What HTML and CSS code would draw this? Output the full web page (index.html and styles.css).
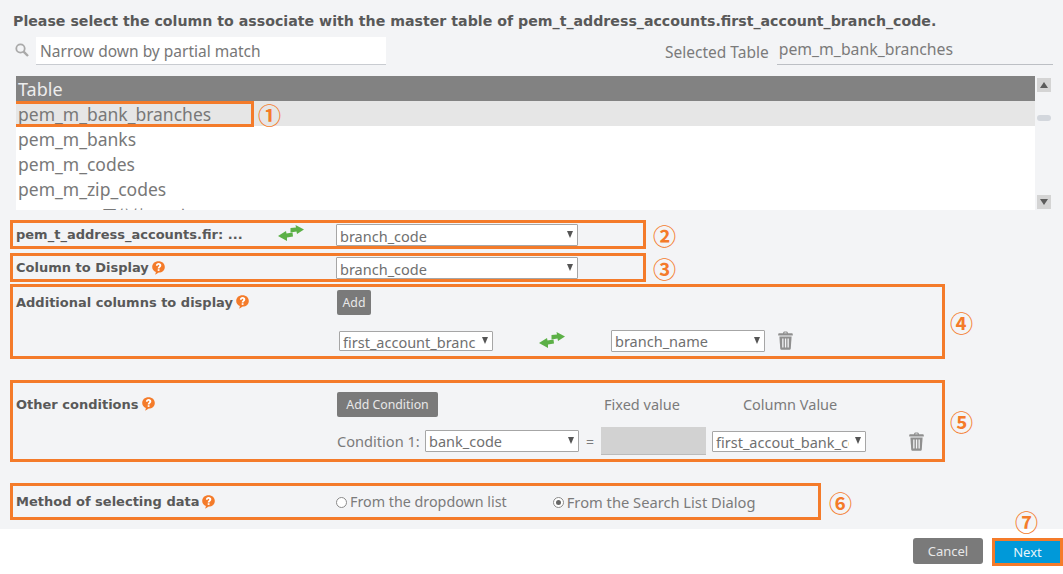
FILE: index.html
```html
<!DOCTYPE html>
<html lang="en">
<head>
<meta charset="utf-8">
<title>Select column</title>
<link rel="stylesheet" href="styles.css">
</head>
<body>
<svg class="defs" width="0" height="0" aria-hidden="true">
  <symbol id="help" viewBox="0 0 13 14">
    <path d="M6.500 0.300C10.200 0.300 12.800 2.700 12.800 5.900 12.800 9.100 10.200 11.500 6.800 11.500L3.200 13.800 3.900 11C1.700 10.100 0.200 8.200 0.200 5.900 0.200 2.700 2.800 0.300 6.500 0.300z" fill="#f47b2a"/>
    <path d="M3.900 4.700C3.900 3 5.100 2.100 6.600 2.100 8.200 2.100 9.300 3 9.300 4.400 9.300 6 7.600 6.200 7.500 7.600H5.700C5.700 5.600 7.300 5.400 7.300 4.500 7.300 4 7 3.700 6.500 3.700 6 3.700 5.700 4.100 5.700 4.700z" fill="#fff"/>
    <rect x="5.700" y="8.200" width="1.800" height="1.700" fill="#fff"/>
  </symbol>
  <symbol id="swap" viewBox="0 0 27 16">
    <path d="M13 3 18.500 2.500 18 0 26.500 4.500 19.500 9 19 6.500 13 7.500z" fill="#5cb047"/>
    <path d="M0.500 11 8.500 6 9 8.500 15 7.500 15.500 11.500 9.500 12.500 9.500 16z" fill="#5cb047"/>
  </symbol>
  <symbol id="trash" viewBox="0 0 15 19">
    <path d="M5 2.200C5 .8 5.800.4 7.500.4s2.500.4 2.500 1.800h3.600c.8 0 1.200.5 1.200 1.200v1.100H.2V3.400c0-.7.4-1.200 1.200-1.200zM6.200 2.200h2.600c0-.6-.3-.8-1.300-.8s-1.300.2-1.300.8z" fill="#8f8f8f"/>
    <path d="M1.400 5.600h12.200l-.8 11.600c-.1 1-.7 1.500-1.600 1.500H3.800c-.9 0-1.500-.5-1.600-1.500z" fill="#8f8f8f"/>
    <path d="M4.200 7.500h1.300v9H4.200zM6.900 7.500h1.300v9H6.900zM9.500 7.500h1.300v9H9.500z" fill="#f3f4f6"/>
  </symbol>
</svg>

<main class="panel">
  <h1 class="title">Please select the column to associate with the master table of pem_t_address_accounts.first_account_branch_code.</h1>

  <div class="search-row">
    <svg class="search-icon" width="14" height="14" viewBox="0 0 14 14" aria-hidden="true">
      <circle cx="5.500" cy="5.500" r="4.200" fill="none" stroke="#a9a9a9" stroke-width="1.800"/>
      <path d="M8.600 8.600 13 13" stroke="#a9a9a9" stroke-width="2.400"/>
    </svg>
    <input class="search" type="text" placeholder="Narrow down by partial match">
    <span class="selected-label">Selected Table</span>
    <input class="selected" type="text" value="pem_m_bank_branches" readonly>
  </div>

  <div class="table-wrap">
    <div class="table">
      <div class="thead">Table</div>
      <div class="trow is-selected">
        pem_m_bank_branches
        <span class="mark-box"></span>
        <span class="num num-1">①</span>
      </div>
      <div class="trow">pem_m_banks</div>
      <div class="trow">pem_m_codes</div>
      <div class="trow">pem_m_zip_codes</div>
      <div class="trow">pem_m_<span class="cjk">区分値マスタ</span></div>
    </div>
    <div class="scrollbar">
      <span class="sb-btn sb-up"></span>
      <span class="sb-thumb"></span>
      <span class="sb-btn sb-down"></span>
    </div>
  </div>

  <div class="group group-2">
    <section class="box box-mid box-row">
      <span class="label label-swap">pem_t_address_accounts.fir: ...</span>
      <svg class="swap swap-main"><use href="#swap"/></svg>
      <span class="sel sel-wide"><select><option>branch_code</option></select></span>
    </section>
    <span class="num">②</span>
  </div>

  <div class="group group-3">
    <section class="box box-mid box-row">
      <span class="label">Column to Display<svg class="help"><use href="#help"/></svg></span>
      <span class="sel sel-wide"><select><option>branch_code</option></select></span>
    </section>
    <span class="num">③</span>
  </div>

  <div class="group group-4">
    <section class="box box-wide box-add">
      <div class="line line-add">
        <span class="label">Additional columns to display<svg class="help"><use href="#help"/></svg></span>
        <button class="btn btn-add" type="button">Add</button>
      </div>
      <div class="line line-map">
        <span class="sel sel-first"><select><option>first_account_branch_code</option></select></span>
        <svg class="swap swap-map"><use href="#swap"/></svg>
        <span class="sel sel-name"><select><option>branch_name</option></select></span>
        <svg class="trash"><use href="#trash"/></svg>
      </div>
    </section>
    <span class="num">④</span>
  </div>

  <div class="group group-5">
    <section class="box box-wide box-cond">
      <div class="line line-add">
        <span class="label">Other conditions<svg class="help"><use href="#help"/></svg></span>
        <button class="btn btn-cond" type="button">Add Condition</button>
        <span class="col-head col-fixed">Fixed value</span>
        <span class="col-head col-value">Column Value</span>
      </div>
      <div class="line line-cond">
        <span class="cond-label">Condition 1:</span>
        <span class="sel sel-bank"><select><option>bank_code</option></select></span>
        <span class="eq">=</span>
        <input class="fixed" type="text" disabled>
        <span class="sel sel-value"><select><option>first_accout_bank_code</option></select></span>
        <svg class="trash trash-cond"><use href="#trash"/></svg>
      </div>
    </section>
    <span class="num">⑤</span>
  </div>

  <div class="group group-6">
    <section class="box box-method box-row">
      <span class="label">Method of selecting data<svg class="help"><use href="#help"/></svg></span>
      <label class="radio radio-a"><span class="dot"></span>From the dropdown list</label>
      <label class="radio radio-b"><span class="dot is-on"></span>From the Search List Dialog</label>
    </section>
    <span class="num">⑥</span>
  </div>
</main>

<footer class="footer">
  <button class="btn btn-cancel" type="button">Cancel</button>
  <span class="next-wrap">
    <span class="num num-7">⑦</span>
    <button class="btn btn-next" type="button">Next</button>
  </span>
</footer>
</body>
</html>
```

FILE: styles.css
```css
* { box-sizing: border-box; }
html, body { margin: 0; padding: 0; }
body {
  width: 1063px;
  height: 574px;
  overflow: hidden;
  background: #fff;
  color: #6f6f6f;
  font-family: "Noto Sans", "Noto Sans CJK JP", sans-serif;
  font-size: 15px;
}
.defs { position: absolute; }

.panel {
  height: 529px;
  padding: 12px 0 0 10px;
  background: #f3f4f6;
}
.title {
  margin: 0 0 0 3px;
  height: 19px;
  font-family: "DejaVu Sans", sans-serif;
  font-size: 14.180px;
  line-height: 19px;
  font-weight: 700;
  color: #595959;
  white-space: nowrap;
}

.search-row {
  display: flex;
  align-items: stretch;
  height: 28px;
  margin-top: 6px;
}
.search-icon { margin: 6px 0 0 5px; flex: none; }
.search {
  width: 350px;
  margin-left: 7px;
  padding: 0 4px;
  border: 0;
  border-bottom: 1px solid #c9ccd1;
  background: #fff;
  font: inherit;
  font-size: 15.500px;
  color: #6f6f6f;
}
.search::placeholder { color: #777; opacity: 1; }
.selected-label {
  margin-left: 279px;
  font-size: 15.500px;
  line-height: 30px;
  color: #7b7b7b;
  white-space: nowrap;
}
.selected {
  width: 276px;
  margin-left: 8px;
  padding: 0 2px 4px;
  border: 0;
  border-bottom: 1px solid #bcbfc4;
  background: transparent;
  font: inherit;
  font-size: 15.800px;
  color: #7b7b7b;
}

.table-wrap {
  display: flex;
  width: 1043px;
  height: 134px;
  margin: 11px 0 0 6px;
}
.table {
  position: relative;
  width: 1019px;
  overflow: hidden;
  background: #fff;
}
.thead {
  height: 25px;
  padding-left: 2px;
  background: #828282;
  color: #ededed;
  font-size: 18px;
  line-height: 26px;
}
.trow {
  position: relative;
  height: 25px;
  padding-left: 2px;
  font-size: 17.500px;
  line-height: 27px;
  color: #787878;
  white-space: nowrap;
}
.cjk { margin-left: 15px; font-size: 14.800px; }
.is-selected { background: #e6e6e6; }
.mark-box {
  position: absolute;
  left: -6px;
  top: 0;
  width: 244px;
  height: 26px;
  border: 3px solid #f47b2a;
}
.num {
  flex: none;
  color: #f47b2a;
  font-family: "Noto Sans CJK JP", sans-serif;
  font-size: 23px;
  font-weight: 700;
  line-height: 26px;
}
.num-1 {
  position: absolute;
  left: 242px;
  top: 0;
}
.scrollbar {
  position: relative;
  flex: none;
  width: 17px;
}
.sb-btn {
  position: absolute;
  left: 2px;
  width: 14px;
  height: 14px;
  background: #d4d4d4;
}
.sb-btn::after {
  content: "";
  position: absolute;
  left: 3px;
  border-left: 4px solid transparent;
  border-right: 4px solid transparent;
}
.sb-up { top: 2px; }
.sb-up::after { top: 4px; border-bottom: 6px solid #5c5c5c; }
.sb-down { bottom: 1px; }
.sb-down::after { top: 4px; border-top: 6px solid #5c5c5c; }
.sb-thumb {
  position: absolute;
  left: 2px;
  top: 39px;
  width: 14px;
  height: 6px;
  border-radius: 3px;
  background: #d3d7dd;
}

.group {
  display: flex;
  align-items: center;
  gap: 7px;
}
.group-2 { margin-top: 10px; }
.group-3 { margin-top: 4px; }
.group-4 { margin-top: 2px; }
.group-5, .group-6 { margin-top: 21px; }
.group-4, .group-5 { gap: 5px; }
.group-6 { gap: 8px; }

.box {
  flex: none;
  border: 3px solid #f47b2a;
  padding-left: 3px;
}
.box-row { display: flex; align-items: center; }
.box-mid { width: 636px; height: 29px; }
.box-wide { width: 935px; }
.box-add { height: 75px; }
.box-cond { height: 82px; }
.box-method { width: 811px; height: 37px; }

.label {
  display: inline-flex;
  align-items: center;
  width: 320px;
  flex: none;
  font-family: "DejaVu Sans", sans-serif;
  font-size: 13px;
  font-weight: 700;
  color: #595959;
  white-space: nowrap;
}
.label-swap { width: 261px; }
.help { width: 13px; height: 14px; margin-left: 3px; }

.swap { width: 28px; height: 16px; flex: none; }
.swap-main { margin: -4px 31px 0 0; }
.swap-map { margin: -2px 45px 0 45px; }

.sel {
  position: relative;
  display: inline-block;
  flex: none;
}
.sel select {
  display: block;
  width: 100%;
  height: 100%;
  padding: 0 16px 0 3px;
  border: 1px solid #a6a6a6;
  border-radius: 1px;
  background: #fff;
  font: inherit;
  font-size: 14.500px;
  color: #707070;
  appearance: none;
  -webkit-appearance: none;
}
.sel::after {
  content: "";
  position: absolute;
  right: 5px;
  top: 50%;
  margin-top: -4px;
  border-left: 3.500px solid transparent;
  border-right: 3.500px solid transparent;
  border-top: 7px solid #555;
  pointer-events: none;
}
.sel-wide { width: 242px; height: 22px; }
.sel-wide select { padding-top: 1px; }
.sel-first { width: 154px; height: 20px; margin-left: 323px; }
.sel-name { width: 154px; height: 22px; }
.sel-bank { width: 154px; height: 22px; }
.sel-value { width: 154px; height: 21px; margin-left: 6px; }

.line { display: flex; align-items: center; }
.line-add { height: 32px; margin-top: -1px; }
.box-cond .line-add { margin-top: 5px; }
.line-map { margin-top: 12px; }
.line-cond { margin: 7px 0 0 321px; }

.btn {
  border: 0;
  border-radius: 2px;
  background: #7a7a7a;
  color: #e8e8e8;
  font: inherit;
  font-size: 12.300px;
  padding: 0;
  flex: none;
}
.btn-add { width: 34px; height: 25px; margin-left: 1px; }
.btn-cond { width: 101px; height: 25px; margin-left: 1px; }

.trash { width: 15px; height: 19px; flex: none; margin-left: 13px; margin-top: -2px; }
.trash-cond { margin-left: 43px; margin-top: 0; }

.col-head { font-size: 14.500px; color: #7b7b7b; white-space: nowrap; }
.col-fixed { margin-left: 166px; }
.col-value { margin-left: 63px; }

.cond-label { width: 88px; flex: none; font-size: 14.600px; color: #7b7b7b; }
.eq { width: 22px; text-align: center; flex: none; font-size: 14px; color: #7b7b7b; }
.fixed {
  width: 105px;
  height: 28px;
  border: 0;
  border-bottom: 1px solid #bbb;
  background: #d2d2d2;
}

.radio {
  display: inline-flex;
  align-items: center;
  color: #7b7b7b;
  white-space: nowrap;
}
.radio-a { font-size: 14.300px; }
.radio-b { margin-left: 46px; font-size: 14.700px; }
.dot {
  position: relative;
  width: 11px;
  height: 11px;
  margin: 2px 3px 0 0;
  border: 1px solid #8a8a8a;
  border-radius: 50%;
  background: #fff;
}
.dot.is-on::after {
  content: "";
  position: absolute;
  left: 2px;
  top: 2px;
  width: 5px;
  height: 5px;
  border-radius: 50%;
  background: #666;
}

.footer {
  display: flex;
  justify-content: flex-end;
  align-items: flex-start;
  height: 45px;
  padding: 9px 0 0 0;
}
.btn-cancel { width: 70px; height: 26px; margin-right: 9px; border-radius: 3px; font-size: 13px; }
.next-wrap { position: relative; display: block; }
.btn-next {
  display: block;
  width: 71px;
  height: 28px;
  border: 3px solid #f47b2a;
  border-radius: 0;
  background: #0099d9;
  color: #e6f5fb;
  font-size: 13px;
}
.num-7 {
  position: absolute;
  left: 23px;
  top: -30px;
}
```
